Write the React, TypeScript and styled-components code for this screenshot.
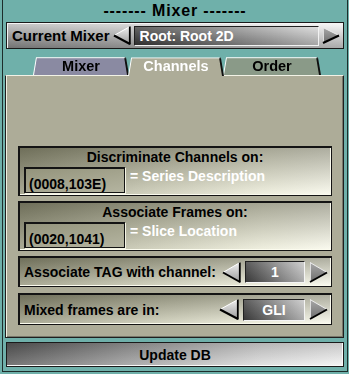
import React from "react";
import styled, { createGlobalStyle, css } from "styled-components";

const GlobalStyle = createGlobalStyle`
  html, body { margin: 0; padding: 0; background: #6fb0aa; }
  * { box-sizing: border-box; }
  body { font-family: "Liberation Sans", Arial, sans-serif; }
`;

const Root = styled.div`
  width: 349px;
  height: 374px;
  background: #6fb0aa;
  padding: 0 1px 2px 2px;
`;

const Frame = styled.div`
  height: 100%;
  border: 1px solid #1d2d2b;
  border-top: none;
  padding: 0 3px;
  display: flex;
  flex-direction: column;
`;

const Title = styled.div`
  height: 21px;
  line-height: 21px;
  text-align: center;
  font-weight: bold;
  font-size: 16px;
  letter-spacing: 0.85px;
  color: #000;
`;

const MixerBar = styled.div`
  margin-top: 1px;
  height: 27px;
  display: flex;
  align-items: center;
  border: 1px solid #1a1a1a;
  box-shadow: inset 1px 1px 0 #f4f4f4;
  background: linear-gradient(to bottom, rgba(255, 255, 255, 0.4), rgba(0, 0, 0, 0.3)),
    linear-gradient(to right, #a4a4a4, #d0d0d0 50%, #f4f4f4);
  padding: 0 3px 0 5px;
`;

const Label = styled.span<{ $size?: number }>`
  font-weight: bold;
  font-size: ${(p) => p.$size ?? 14}px;
  color: #000;
  white-space: nowrap;
`;

const Dropdown = styled.div`
  flex: 1;
  height: 20px;
  margin: 0 3px;
  border: 1px solid #f2f2f2;
  border-left-color: #202020;
  border-top-color: #202020;
  background: linear-gradient(to bottom, rgba(255, 255, 255, 0.22), rgba(0, 0, 0, 0.22)),
    linear-gradient(to right, #3a3a3a, #d4d4d4);
  color: #fff;
  font-weight: bold;
  font-size: 14px;
  line-height: 18px;
  padding-left: 5px;
`;

const ArrowSvg = styled.svg<{ $gapLeft?: number }>`
  display: block;
  flex: none;
  margin-left: ${(p) => p.$gapLeft ?? 0}px;
`;

type ArrowProps = { dir: "left" | "right"; w: number; h: number; gapLeft?: number };

function Arrow({ dir, w, h, gapLeft }: ArrowProps) {
  const id = `g-${dir}-${w}-${h}`;
  const mid = h / 2;
  if (dir === "left") {
    return (
      <ArrowSvg width={w} height={h} viewBox={`0 0 ${w} ${h}`} $gapLeft={gapLeft}>
        <defs>
          <linearGradient id={id} x1="0" y1="0" x2="0" y2="1">
            <stop offset="0" stopColor="#f0f0f0" />
            <stop offset="1" stopColor="#9a9a9a" />
          </linearGradient>
        </defs>
        <polygon points={`1,${mid} ${w - 1},0.5 ${w - 1},${h - 0.5}`} fill={`url(#${id})`} />
        <line x1="1" y1={mid} x2={w - 1} y2="0.5" stroke="#ffffff" strokeWidth="1" />
        <line x1={w - 1.2} y1="0.5" x2={w - 1.2} y2={h - 0.5} stroke="#000" strokeWidth="1.8" />
        <line x1={w - 1} y1={h - 1} x2="1" y2={mid} stroke="#000" strokeWidth="2" />
      </ArrowSvg>
    );
  }
  return (
    <ArrowSvg width={w} height={h} viewBox={`0 0 ${w} ${h}`} $gapLeft={gapLeft}>
      <defs>
        <linearGradient id={id} x1="0" y1="0" x2="0" y2="1">
          <stop offset="0" stopColor="#a8a8a8" />
          <stop offset="1" stopColor="#6c6c6c" />
        </linearGradient>
      </defs>
      <polygon points={`1,0.5 ${w - 1},${mid} 1,${h - 0.5}`} fill={`url(#${id})`} />
      <line x1="1.5" y1="0.5" x2="1.5" y2={h - 0.5} stroke="#dcdcdc" strokeWidth="1" />
      <line x1="1" y1="0.5" x2={w - 1} y2={mid} stroke="#ececec" strokeWidth="1" />
      <line x1={w - 1} y1={mid} x2="1" y2={h - 1} stroke="#000" strokeWidth="2" />
    </ArrowSvg>
  );
}

const TabStrip = styled.div`
  margin-top: 7px;
  height: 19px;
  display: flex;
  padding-left: 27px;
  position: relative;
  z-index: 1;
`;

const tabTones = {
  mixer: "#8a8aa2",
  channels: "#adac98",
  order: "#8a9a88",
};

const Tab = styled.div<{ $tone: keyof typeof tabTones; $w: number; $active?: boolean }>`
  position: relative;
  width: ${(p) => p.$w}px;
  height: ${(p) => (p.$active ? 20 : 19)}px;
  margin-right: -1px;
  z-index: ${(p) => (p.$active ? 2 : 1)};
  display: flex;
  align-items: flex-start;
  justify-content: center;
  font-weight: bold;
  font-size: 14.5px;
  line-height: 15px;
  padding-top: 3px;
  color: ${(p) => (p.$active ? "#ffffff" : "#000000")};
  &::before {
    content: "";
    position: absolute;
    inset: 0;
    z-index: -1;
    background: ${(p) => tabTones[p.$tone]};
    border: 1px solid #ffffff;
    border-right: 2px solid #101010;
    border-bottom: none;
    transform: perspective(40px) rotateX(8deg);
    transform-origin: bottom;
  }
`;

const Panel = styled.div`
  margin-left: -1px;
  height: 263px;
  background: #adac98;
  border: 1px solid #1e1e1e;
  border-top-color: #f2f2e6;
  box-shadow: inset 1px 0 0 #f0f0e2, inset -1px -1px 0 #77776a;
  display: flex;
  flex-direction: column;
  justify-content: flex-end;
  padding: 0 11px 12px 12px;
`;

const boxLook = css`
  border: 2px solid #141414;
  border-right-width: 1px;
  border-bottom-width: 1px;
  box-shadow: inset -1px -1px 0 #fbfbee;
  background: linear-gradient(to bottom, rgba(50, 50, 30, 0.38), rgba(255, 255, 240, 0.22)),
    linear-gradient(to right, #94947e, #c4c4b0 40%, #ececdc 78%, #fafaf0);
`;

const Group = styled.div`
  ${boxLook};
  height: 50px;
  margin-top: 5px;
  padding: 2px 5px 0 4px;
`;

const GroupTitle = styled.div`
  text-align: center;
  font-weight: bold;
  font-size: 14px;
  line-height: 15px;
  color: #000;
`;

const GroupBody = styled.div`
  display: flex;
  align-items: flex-start;
  margin-top: 2px;
`;

const TagField = styled.div`
  width: 101px;
  height: 26px;
  border: 2px solid #141414;
  border-right-width: 1px;
  border-bottom-width: 1px;
  background: linear-gradient(170deg, #94947c, #b4b4a0);
  box-shadow: 1px 1px 0 #f4f4e4;
  font-weight: bold;
  font-size: 14px;
  color: #000;
  padding: 8px 0 0 3px;
  line-height: 15px;
  white-space: nowrap;
`;

const TagValue = styled.div`
  margin: 2px 0 0 5px;
  font-weight: bold;
  font-size: 14px;
  color: #ffffff;
  line-height: 15px;
  white-space: nowrap;
`;

const SpinRow = styled.div<{ $h: number; $gap: number }>`
  ${boxLook};
  height: ${(p) => p.$h}px;
  margin-top: ${(p) => p.$gap}px;
  display: flex;
  align-items: center;
  padding: 0 3px 0 4px;
`;

const SpinLabel = styled(Label)`
  flex: 1;
`;

const SpinField = styled.div<{ $w: number }>`
  width: ${(p) => p.$w}px;
  height: 22px;
  margin: 0 4px;
  border: 1px solid #f4f4f4;
  border-left-color: #202020;
  border-top-color: #202020;
  background: linear-gradient(to bottom, rgba(255, 255, 255, 0.15), rgba(0, 0, 0, 0.15)),
    linear-gradient(to right, #424242, #c8c8c8);
  color: #fff;
  font-weight: bold;
  font-size: 14px;
  line-height: 20px;
  text-align: center;
`;

const UpdateButton = styled.div`
  margin-top: 4px;
  height: 25px;
  border: 1px solid #1a1a1a;
  box-shadow: inset -1px -1px 0 #fafafa;
  background: linear-gradient(to bottom, rgba(0, 0, 0, 0.18), rgba(255, 255, 255, 0.18)),
    linear-gradient(to right, #5a5a5a, #9a9a9a 35%, #dcdcdc 75%, #f4f4f4);
  display: flex;
  align-items: center;
  justify-content: center;
  font-weight: bold;
  font-size: 14px;
  color: #000;
`;

export default function App() {
  return (
    <Root>
      <GlobalStyle />
      <Frame>
        <Title>------- Mixer -------</Title>
        <MixerBar>
          <Label $size={15}>Current Mixer</Label>
          <Arrow dir="left" w={18} h={19} gapLeft={3} />
          <Dropdown>Root: Root 2D</Dropdown>
          <Arrow dir="right" w={18} h={17} />
        </MixerBar>
        <TabStrip>
          <Tab $tone="mixer" $w={96}>
            Mixer
          </Tab>
          <Tab $tone="channels" $w={96} $active>
            Channels
          </Tab>
          <Tab $tone="order" $w={98}>
            Order
          </Tab>
        </TabStrip>
        <Panel>
          <Group>
            <GroupTitle>Discriminate Channels on:</GroupTitle>
            <GroupBody>
              <TagField>(0008,103E)</TagField>
              <TagValue>= Series Description</TagValue>
            </GroupBody>
          </Group>
          <Group>
            <GroupTitle>Associate Frames on:</GroupTitle>
            <GroupBody>
              <TagField>(0020,1041)</TagField>
              <TagValue>= Slice Location</TagValue>
            </GroupBody>
          </Group>
          <SpinRow $h={31} $gap={5}>
            <SpinLabel>Associate TAG with channel:</SpinLabel>
            <Arrow dir="left" w={19} h={21} />
            <SpinField $w={60}>1</SpinField>
            <Arrow dir="right" w={19} h={21} />
          </SpinRow>
          <SpinRow $h={32} $gap={6}>
            <SpinLabel>Mixed frames are in:</SpinLabel>
            <Arrow dir="left" w={20} h={21} />
            <SpinField $w={62}>GLI</SpinField>
            <Arrow dir="right" w={19} h={21} />
          </SpinRow>
        </Panel>
        <UpdateButton>Update DB</UpdateButton>
      </Frame>
    </Root>
  );
}
